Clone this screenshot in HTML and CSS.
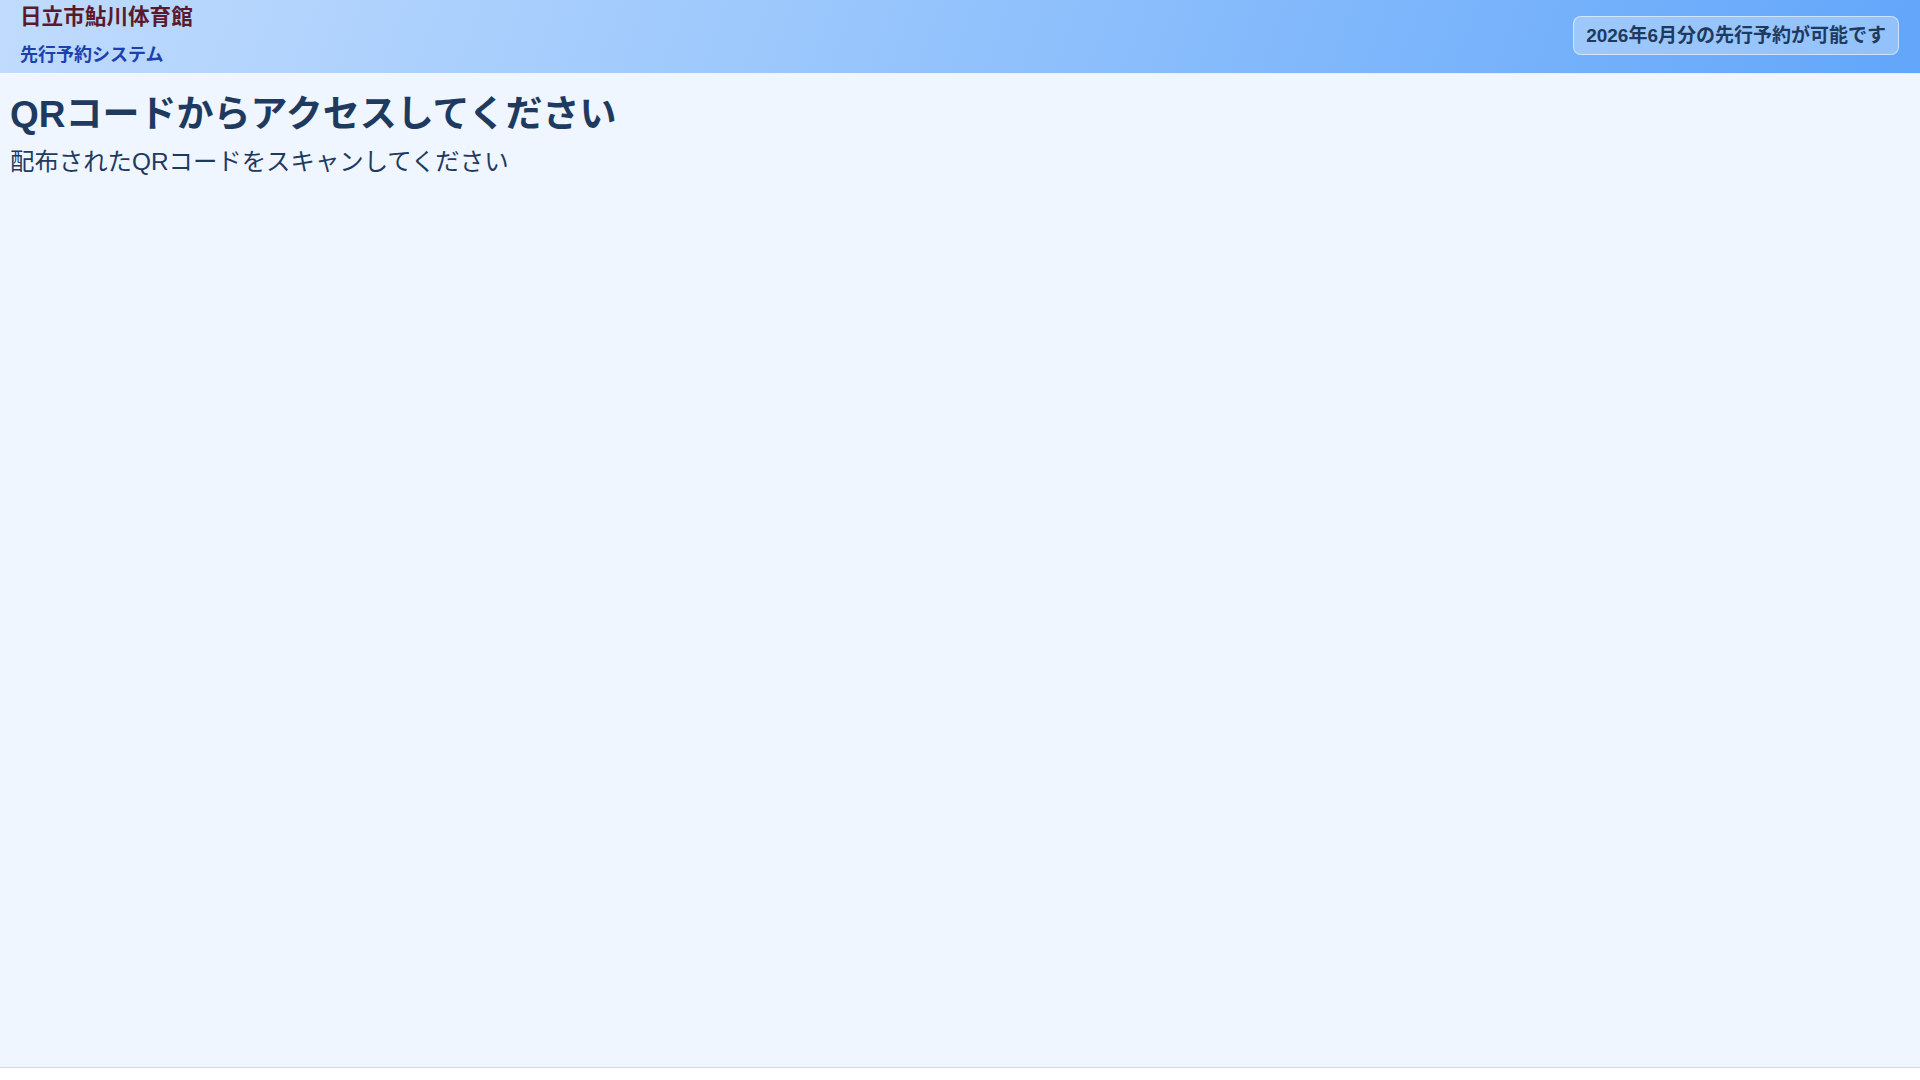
FILE: index.html
```html
<!DOCTYPE html>
<html lang="ja">
<head>
<meta charset="utf-8">
<title>日立市鮎川体育館 先行予約システム</title>
<link rel="stylesheet" href="styles.css">
</head>
<body>
<div class="page">
  <header class="header">
    <div class="brand">
      <div class="brand-title">日立市鮎川体育館</div>
      <div class="brand-sub">先行予約システム</div>
    </div>
    <div class="badge">2026年6月分の先行予約が可能です</div>
  </header>
  <main class="main">
    <h1 class="heading">QRコードからアクセスしてください</h1>
    <p class="lead">配布されたQRコードをスキャンしてください</p>
  </main>
</div>
</body>
</html>
```

FILE: styles.css
```css
html, body {
  margin: 0;
  padding: 0;
  background: #ffffff;
}
body {
  font-family: "Liberation Sans", Arial, "Noto Sans CJK JP", sans-serif;
  color: #1e3a5f;
}
.page {
  min-height: 1068px;
  box-sizing: border-box;
  display: flex;
  flex-direction: column;
  background: #eff6ff;
  border-bottom: 1px solid #c7dbfa;
}
.header {
  height: 74px;
  box-sizing: border-box;
  padding: 0 21px 0 20px;
  display: flex;
  align-items: center;
  justify-content: space-between;
  background: linear-gradient(110deg, #c0dbfd 0%, #9cc8fc 40%, #62a6fa 100%);
  border-bottom: 1px solid rgba(255, 255, 255, 0.8);
}
.brand {
  display: flex;
  flex-direction: column;
  align-self: flex-start;
}
.brand-title {
  font-size: 21.6px;
  font-weight: bold;
  color: #5a1a2c;
  line-height: 34px;
}
.brand-sub {
  font-size: 18px;
  font-weight: bold;
  color: #1e40af;
  line-height: 20px;
  margin-top: 11px;
}
.badge {
  font-size: 19px;
  font-weight: bold;
  color: #1e3a5f;
  padding: 8px 12px;
  line-height: 21px;
  border-radius: 8px;
  background: rgba(255, 255, 255, 0.3);
  border: 1px solid rgba(255, 255, 255, 0.55);
  margin-bottom: 2px;
}
.main {
  flex: 1;
  padding: 19px 10px;
}
.heading {
  margin: 0;
  font-size: 37px;
  line-height: 44px;
  font-weight: bold;
  color: #1e3a5f;
}
.lead {
  margin: 9px 0 0;
  font-size: 24.4px;
  line-height: 32px;
  color: #1e3a5f;
}
```
